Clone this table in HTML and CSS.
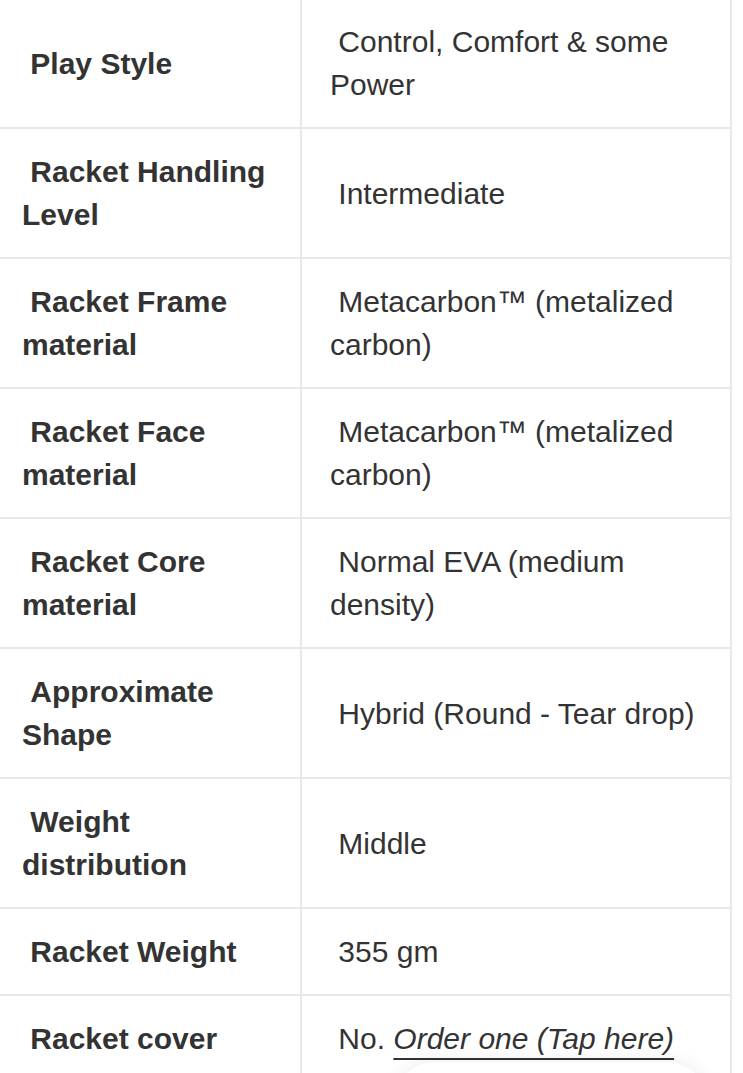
FILE: index.html
```html
<!DOCTYPE html>
<html lang="en">
<head>
<meta charset="utf-8">
<title>Racket specs</title>
<link rel="stylesheet" href="styles.css">
</head>
<body>
<div class="specs">
  <div class="cell label">&nbsp;Play Style</div>
  <div class="cell value">&nbsp;Control, Comfort &amp; some Power</div>

  <div class="cell label">&nbsp;Racket Handling Level</div>
  <div class="cell value">&nbsp;Intermediate</div>

  <div class="cell label">&nbsp;Racket Frame material</div>
  <div class="cell value">&nbsp;Metacarbon™ (metalized carbon)</div>

  <div class="cell label">&nbsp;Racket Face material</div>
  <div class="cell value">&nbsp;Metacarbon™ (metalized carbon)</div>

  <div class="cell label">&nbsp;Racket Core material</div>
  <div class="cell value">&nbsp;Normal EVA (medium density)</div>

  <div class="cell label">&nbsp;Approximate Shape</div>
  <div class="cell value">&nbsp;Hybrid (Round - Tear drop)</div>

  <div class="cell label">&nbsp;Weight distribution</div>
  <div class="cell value">&nbsp;Middle</div>

  <div class="cell label">&nbsp;Racket Weight</div>
  <div class="cell value">&nbsp;355 gm</div>

  <div class="cell label">&nbsp;Racket cover</div>
  <div class="cell value"><span>&nbsp;No.&nbsp;<a class="order" href="#">Order one (Tap here)</a></span></div>
</div>
<div class="floating"></div>
</body>
</html>
```

FILE: styles.css
```css
html, body {
  margin: 0;
  padding: 0;
  background: #ffffff;
}

html {
  overflow: hidden;
}

body {
  font-family: "Liberation Sans", Arial, Helvetica, sans-serif;
  font-size: 30px;
  line-height: 43px;
  color: #333333;
  overflow: hidden;
  position: relative;
  height: 1073px;
}

.specs {
  display: grid;
  grid-template-columns: 302px 430px;
  margin-top: -1px;
}

.cell {
  display: flex;
  align-items: center;
  box-sizing: border-box;
  padding-top: 21px;
  padding-bottom: 21px;
  border-bottom: 2px solid #e8e8e8;
  border-right: 2px solid #e8e8e8;
}

.label {
  font-weight: bold;
  padding-left: 22px;
  padding-right: 3px;
}

.value {
  padding-left: 28px;
  padding-right: 16px;
}

.order {
  color: #333333;
  font-style: italic;
  text-decoration: underline;
  text-decoration-thickness: 2px;
  text-underline-offset: 9px;
}

.floating {
  position: absolute;
  left: 392px;
  top: 1062px;
  width: 318px;
  height: 90px;
  border-radius: 44px;
  background: #ffffff;
  box-shadow: 0 -2px 18px rgba(0, 0, 0, 0.07);
}
```
